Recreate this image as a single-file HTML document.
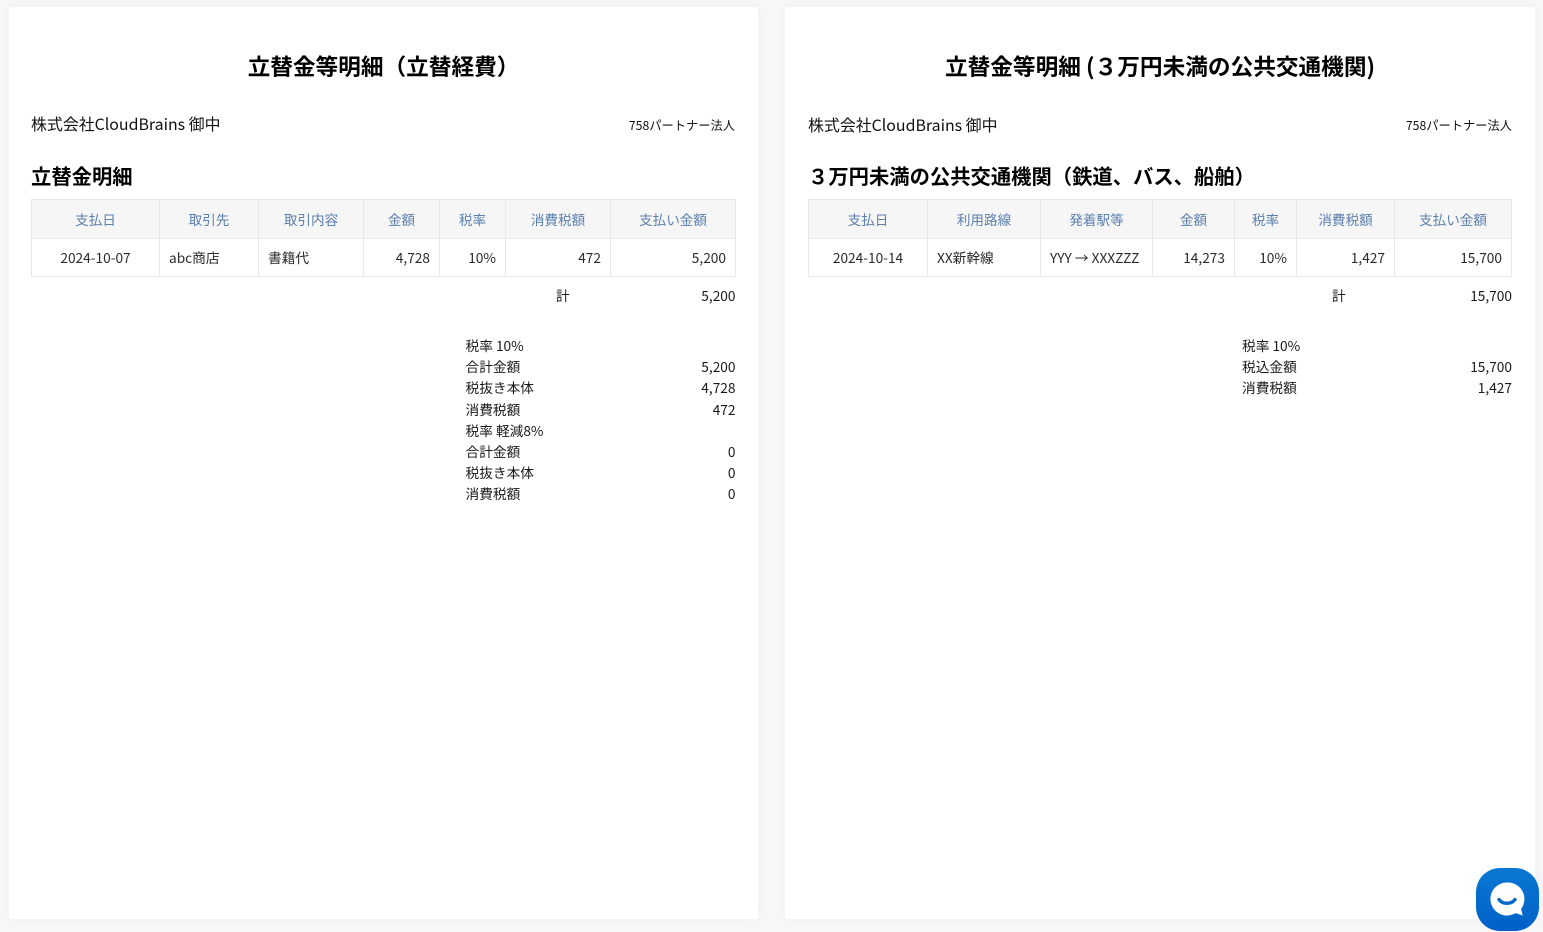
<!DOCTYPE html>
<html lang="ja"><head><meta charset="utf-8"><title>立替金等明細</title>
<style>
*{box-sizing:border-box}
html,body{margin:0;padding:0;width:1543px;height:932px;overflow:hidden;background:#f7f7f8}
body{font-family:"Noto Sans CJK JP","Liberation Sans",sans-serif;color:#222;position:relative}
.card{position:absolute;top:7px;height:912px;background:#fff;box-shadow:0 0 12px rgba(0,0,0,.035)}
.t{position:absolute;white-space:nowrap;line-height:20px}
.title{font-size:22.67px;font-weight:700;color:#000;line-height:32px;text-align:center}
.sub{font-size:15.92px;line-height:24px;color:#111}
.h2{font-size:20.32px;font-weight:700;color:#000;line-height:30px}
.sm{font-size:12.25px;line-height:18px;color:#111}
.b{font-size:13.7px;color:#1a1a1a}
.r{text-align:right}
table{position:absolute;border-collapse:collapse;table-layout:fixed;font-size:13.6px;top:199px;height:78px}
th,td{border:1px solid #e6e7ea;padding:1px 9px 0;height:38.5px;line-height:20px;white-space:nowrap;overflow:hidden}
th{background:#f6f6f7;color:#5b7fae;font-weight:400;text-align:center}
td{color:#2a2a2a;background:#fff;font-size:13.7px;padding:0 9px 1px}
.c{text-align:center}
</style></head><body>
<div class="card" style="left:9px;width:749px"></div>
<div class="card" style="left:785px;width:750px"></div>

<div class="t title" style="left:9px;width:749px;top:50px">立替金等明細（立替経費）</div>
<div class="t sub" style="left:31px;top:112px">株式会社CloudBrains 御中</div>
<div class="t sm r" style="right:808px;top:116px">758パートナー法人</div>
<div class="t h2" style="left:31px;top:160px">立替金明細</div>

<table style="left:31px;width:704px">
<colgroup><col style="width:128px"><col style="width:99px"><col style="width:105px"><col style="width:76px"><col style="width:66px"><col style="width:105px"><col style="width:125px"></colgroup>
<tr><th>支払日</th><th>取引先</th><th>取引内容</th><th>金額</th><th>税率</th><th>消費税額</th><th>支払い金額</th></tr>
<tr><td class="c">2024-10-07</td><td>abc商店</td><td>書籍代</td><td class="r">4,728</td><td class="r">10%</td><td class="r">472</td><td class="r">5,200</td></tr>
</table>

<div class="t b" style="left:556px;top:285px">計</div>
<div class="t b r" style="right:807.5px;top:285px">5,200</div>

<div class="t b" style="left:465.5px;top:335px">税率 10%</div>
<div class="t b" style="left:465.5px;top:356px">合計金額</div><div class="t b r" style="right:807.5px;top:356px">5,200</div>
<div class="t b" style="left:465.5px;top:377px">税抜き本体</div><div class="t b r" style="right:807.5px;top:377px">4,728</div>
<div class="t b" style="left:465.5px;top:399px">消費税額</div><div class="t b r" style="right:807.5px;top:399px">472</div>
<div class="t b" style="left:465.5px;top:420px">税率 軽減8%</div>
<div class="t b" style="left:465.5px;top:441px">合計金額</div><div class="t b r" style="right:807.5px;top:441px">0</div>
<div class="t b" style="left:465.5px;top:462px">税抜き本体</div><div class="t b r" style="right:807.5px;top:462px">0</div>
<div class="t b" style="left:465.5px;top:483px">消費税額</div><div class="t b r" style="right:807.5px;top:483px">0</div>

<div class="t title" style="left:785px;width:750px;top:50px">立替金等明細 (３万円未満の公共交通機関)</div>
<div class="t sub" style="left:808px;top:113px">株式会社CloudBrains 御中</div>
<div class="t sm r" style="right:31px;top:116px">758パートナー法人</div>
<div class="t h2" style="left:808px;top:160px">３万円未満の公共交通機関（鉄道、バス、船舶）</div>

<table style="left:808px;width:703px">
<colgroup><col style="width:119px"><col style="width:113px"><col style="width:112px"><col style="width:82px"><col style="width:62px"><col style="width:98px"><col style="width:117px"></colgroup>
<tr><th>支払日</th><th>利用路線</th><th>発着駅等</th><th>金額</th><th>税率</th><th>消費税額</th><th>支払い金額</th></tr>
<tr><td class="c">2024-10-14</td><td>XX新幹線</td><td>YYY → XXXZZZ</td><td class="r">14,273</td><td class="r">10%</td><td class="r">1,427</td><td class="r">15,700</td></tr>
</table>

<div class="t b" style="left:1332px;top:285px">計</div>
<div class="t b r" style="right:31px;top:285px">15,700</div>
<div class="t b" style="left:1242px;top:335px">税率 10%</div>
<div class="t b" style="left:1242px;top:356px">税込金額</div><div class="t b r" style="right:31px;top:356px">15,700</div>
<div class="t b" style="left:1242px;top:377px">消費税額</div><div class="t b r" style="right:31px;top:377px">1,427</div>

<svg style="position:absolute;left:1476px;top:868px" width="63" height="63" viewBox="0 0 63 63">
<defs><linearGradient id="g" x1="0" y1="0" x2="0" y2="1"><stop offset="0" stop-color="#0a78d2"/><stop offset="1" stop-color="#0060c8"/></linearGradient></defs>
<rect width="63" height="63" rx="24" fill="url(#g)"/>
<path d="M31 14.5a16.5 16.5 0 1 0 8.5 30.6l7.2 2.4-1.6-6.6A16.5 16.5 0 0 0 31 14.5z" fill="#fff"/>
<path d="M23 31.5c3.5 5 12.5 5 16 0" fill="none" stroke="#0868cc" stroke-width="3.4" stroke-linecap="round"/>
</svg>
</body></html>
